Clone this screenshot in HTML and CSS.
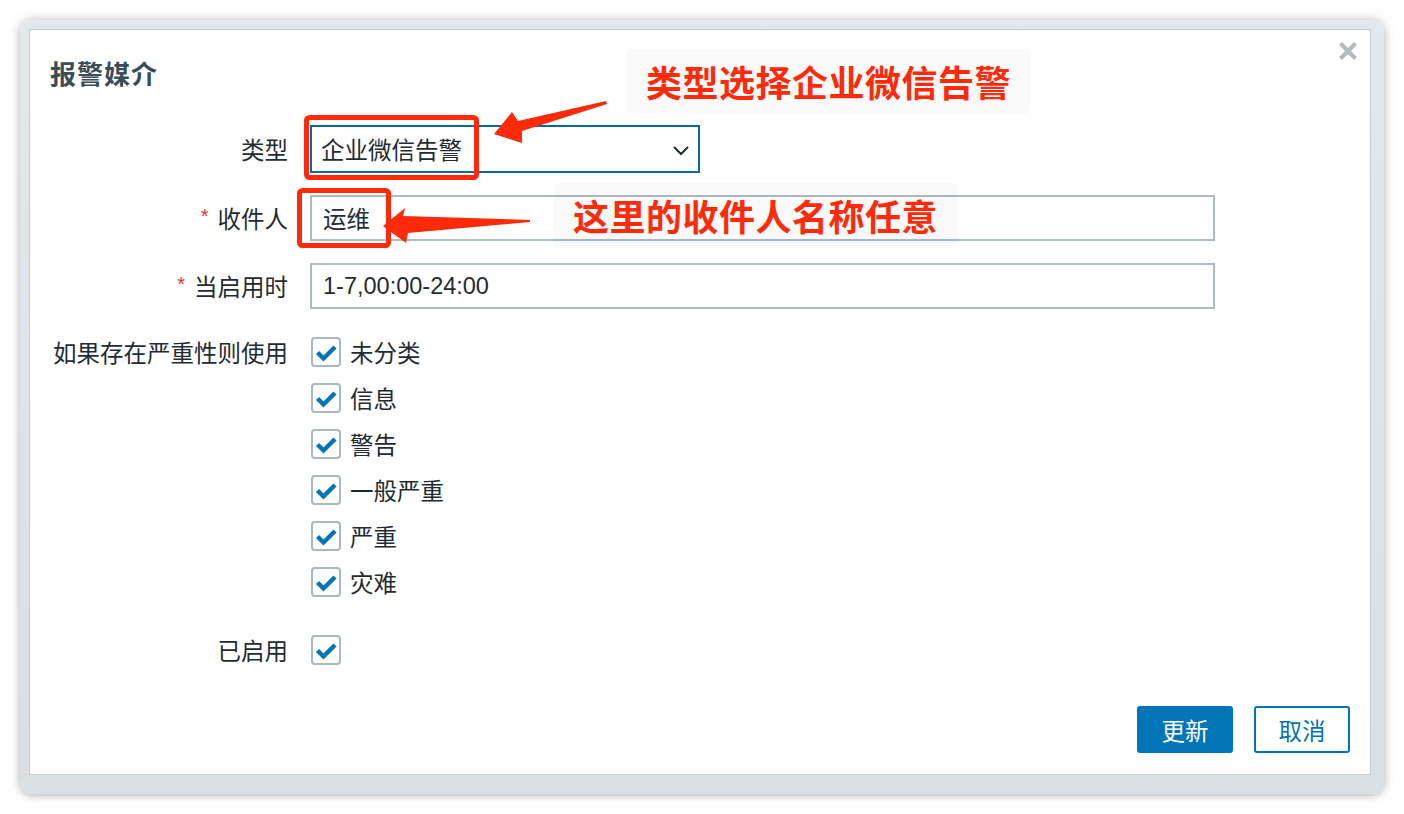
FILE: index.html
```html
<!DOCTYPE html>
<html lang="zh-CN">
<head>
<meta charset="utf-8">
<title>报警媒介</title>
<link rel="stylesheet" href="styles.css">
</head>
<body>
<div class="stage">
  <div class="frame">
    <div class="dialog">
      <div class="dialog-head">
        <h1 class="title">报警媒介</h1>
        <button class="close" aria-label="关闭">
          <svg width="18" height="18" viewBox="0 0 18 18"><path d="M3 3 L15 15 M15 3 L3 15" stroke="#b5bbbf" stroke-width="4.2" stroke-linecap="square"/></svg>
        </button>
      </div>
      <div class="form">
        <div class="label row-select">类型</div>
        <div class="control row-select">
          <div class="select">
            <span>企业微信告警</span>
            <svg class="chev" width="18" height="12" viewBox="0 0 18 12"><path d="M2 3 L9 10 L16 3" fill="none" stroke="#1f2c33" stroke-width="2"/></svg>
          </div>
        </div>

        <div class="label row-input"><span class="req">*</span>收件人</div>
        <div class="control row-input"><div class="input">运维</div></div>

        <div class="label row-input"><span class="req">*</span>当启用时</div>
        <div class="control row-input"><div class="input latin">1-7,00:00-24:00</div></div>

        <div class="label label-top">如果存在严重性则使用</div>
        <div class="control sev-list">
          <div class="check-row"><span class="cb"><svg width="26" height="26" viewBox="0 0 26 26"><path d="M4.5 13.5 L10.5 19.5 L22 8" fill="none" stroke="#0275b8" stroke-width="4.4"/></svg></span><span>未分类</span></div>
          <div class="check-row"><span class="cb"><svg width="26" height="26" viewBox="0 0 26 26"><path d="M4.5 13.5 L10.5 19.5 L22 8" fill="none" stroke="#0275b8" stroke-width="4.4"/></svg></span><span>信息</span></div>
          <div class="check-row"><span class="cb"><svg width="26" height="26" viewBox="0 0 26 26"><path d="M4.5 13.5 L10.5 19.5 L22 8" fill="none" stroke="#0275b8" stroke-width="4.4"/></svg></span><span>警告</span></div>
          <div class="check-row"><span class="cb"><svg width="26" height="26" viewBox="0 0 26 26"><path d="M4.5 13.5 L10.5 19.5 L22 8" fill="none" stroke="#0275b8" stroke-width="4.4"/></svg></span><span>一般严重</span></div>
          <div class="check-row"><span class="cb"><svg width="26" height="26" viewBox="0 0 26 26"><path d="M4.5 13.5 L10.5 19.5 L22 8" fill="none" stroke="#0275b8" stroke-width="4.4"/></svg></span><span>严重</span></div>
          <div class="check-row"><span class="cb"><svg width="26" height="26" viewBox="0 0 26 26"><path d="M4.5 13.5 L10.5 19.5 L22 8" fill="none" stroke="#0275b8" stroke-width="4.4"/></svg></span><span>灾难</span></div>
        </div>

        <div class="label row-input">已启用</div>
        <div class="control row-input"><div class="check-row"><span class="cb"><svg width="26" height="26" viewBox="0 0 26 26"><path d="M4.5 13.5 L10.5 19.5 L22 8" fill="none" stroke="#0275b8" stroke-width="4.4"/></svg></span></div></div>
      </div>
      <div class="footer">
        <button class="btn btn-primary">更新</button>
        <button class="btn btn-outline">取消</button>
      </div>
    </div>
  </div>

  <div class="note note-1">类型选择企业微信告警</div>
  <div class="note note-2">这里的收件人名称任意</div>

  <svg class="marks" width="1404" height="814" viewBox="0 0 1404 814">
    <rect x="306.5" y="117.5" width="170" height="60" rx="3" fill="none" stroke="#fe2a0a" stroke-width="5"/>
    <rect x="299.5" y="190.5" width="89" height="55" rx="3" fill="none" stroke="#fe2a0a" stroke-width="5"/>
    <polygon points="606,101 607,104 522,131 522,143 494,134 512,112 518,121" fill="#fe2a0a"/>
    <polygon points="530,220 530,222 408,233 406,243 383,226 405,208 403,216" fill="#fe2a0a"/>
  </svg>
</div>
</body>
</html>
```

FILE: styles.css
```css
* { box-sizing: border-box; }

html, body {
  margin: 0;
  padding: 0;
  background: #ffffff;
}

body {
  font-family: "Noto Sans CJK SC", "Noto Sans", sans-serif;
  color: #1f2c33;
}

.stage {
  position: relative;
  width: 1404px;
  height: 814px;
  padding: 20px;
  overflow: hidden;
}

.frame {
  width: 1364px;
  height: 774px;
  padding: 9px 13px 19px 9px;
  border-radius: 12px;
  background: linear-gradient(#e3e8eb, #d9dfe3);
  box-shadow: 0 0 12px rgba(0, 0, 0, 0.22), 0 2px 6px rgba(0, 0, 0, 0.12);
}

.dialog {
  width: 1342px;
  height: 746px;
  background: #ffffff;
  border: 1px solid #c4ced4;
  display: flex;
  flex-direction: column;
  padding: 0 20px 21px 21px;
}

.dialog-head {
  display: flex;
  justify-content: space-between;
  align-items: flex-start;
  height: 95px;
}

.title {
  margin: 25px 0 0 -1px;
  font-size: 26px;
  line-height: 36px;
  font-weight: 700;
  color: #3a4c58;
  letter-spacing: 1px;
}

.close {
  margin: 12px -7px 0 0;
  padding: 0;
  border: 0;
  background: transparent;
  width: 18px;
  height: 18px;
  display: flex;
}

.form {
  display: grid;
  grid-template-columns: 237px 905px;
  column-gap: 22px;
  row-gap: 22px;
  font-size: 23.5px;
}

.label {
  display: flex;
  align-items: center;
  justify-content: flex-end;
  white-space: nowrap;
}

.label-top {
  align-items: flex-start;
  height: 46px;
  line-height: 46px;
  margin-top: -2px;
}

.req {
  color: #e0362f;
  font-family: "Liberation Sans", sans-serif;
  font-size: 20px;
  margin-right: 9px;
  position: relative;
  top: -2px;
}

.row-select { height: 48px; }
.row-input { height: 46px; }

.control {
  display: flex;
  align-items: center;
}

.select {
  width: 390px;
  height: 48px;
  border: 2px solid #0a68a0;
  display: flex;
  align-items: center;
  justify-content: space-between;
  padding: 0 8px 0 9px;
}

.chev { margin-top: 1px; }

.input {
  width: 905px;
  height: 46px;
  border: 2px solid #aebbc2;
  display: flex;
  align-items: center;
  padding: 0 11px;
}

.latin {
  font-family: "Liberation Sans", "Noto Sans CJK SC", sans-serif;
  font-size: 23.5px;
}

.sev-list {
  flex-direction: column;
  align-items: flex-start;
  margin-top: -2px;
}

.check-row {
  height: 46px;
  display: flex;
  align-items: center;
  gap: 9px;
  padding-left: 1px;
}

.cb {
  width: 30px;
  height: 30px;
  border: 2px solid #aab8c0;
  border-radius: 4px;
  display: flex;
  align-items: center;
  justify-content: center;
}

.footer {
  margin-top: auto;
  display: flex;
  justify-content: flex-end;
  gap: 21px;
}

.btn {
  width: 96px;
  height: 47px;
  border-radius: 3px;
  font-family: "Noto Sans CJK SC", sans-serif;
  font-size: 23.5px;
  padding: 0;
}

.btn-primary {
  background: #0275b8;
  border: 2px solid #0275b8;
  color: #ffffff;
}

.btn-outline {
  background: #ffffff;
  border: 2px solid #0275b8;
  color: #0275b8;
}

.note {
  position: absolute;
  background: rgba(0, 0, 0, 0.018);
  border-radius: 6px;
  color: #fe2a0a;
  font-weight: 700;
  font-size: 36px;
  line-height: 65px;
  height: 65px;
  padding: 0 20px;
  white-space: nowrap;
  letter-spacing: 0.5px;
}

.note-1 { left: 626px; top: 49px; }
.note-2 { left: 553px; top: 183px; }

.marks {
  position: absolute;
  left: 0;
  top: 0;
  pointer-events: none;
}
```
